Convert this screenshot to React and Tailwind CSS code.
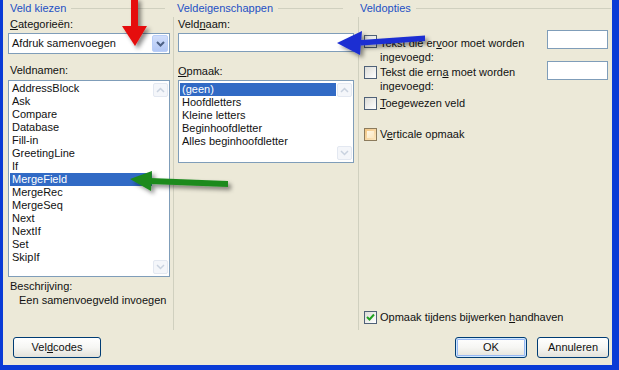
import React from "react";

const Chevron = ({ up, color = "#4D6185", w = 2 }) => (
  <svg width="9" height="6" viewBox="0 0 9 6">
    <path d={up ? "M1 5 L4.5 1.5 L8 5" : "M1 1 L4.5 4.5 L8 1"} fill="none" stroke={color} strokeWidth={w} />
  </svg>
);

const ScrollBtn = ({ up }) => (
  <div className="w-[15px] h-[14px] rounded-[2px] border border-[#E3E8F1] bg-[#F4F6FA] flex items-center justify-center">
    <Chevron up={up} color="#C9D2DF" w={1.5} />
  </div>
);

const ListBox = ({ items, selected, h, topPad = "pt-[1px]" }) => (
  <div className={`border border-[#7F9DB9] bg-white flex ${h}`}>
    <div className={`flex-1 flex flex-col ${topPad} pl-[1px]`}>
      {items.map((it) => (
        <div
          key={it}
          className={`h-[13px] leading-[13px] pl-[2px] ${it === selected ? "bg-[#316AC5] text-white" : "text-[#111]"}`}
        >
          {it}
        </div>
      ))}
    </div>
    <div className="w-[17px] flex flex-col justify-between items-center py-[2px] pr-[1px]">
      <ScrollBtn up />
      <ScrollBtn />
    </div>
  </div>
);

const Check = ({ checked, hover }) => (
  <div
    className={`w-[13px] h-[13px] shrink-0 border flex items-center justify-center ${
      hover
        ? "border-[#8C7B5C] bg-gradient-to-br from-[#F2C583] to-[#FCE8C2]"
        : "border-[#4F6178] bg-gradient-to-br from-[#DCDCD7] to-white"
    }`}
  >
    {hover && <div className="w-[7px] h-[7px] bg-gradient-to-br from-[#FFF7E6] to-[#FBE6BE]" />}
    {checked && (
      <svg width="9" height="9" viewBox="0 0 9 9">
        <path d="M1 4 L3.5 6.5 L8 1.5" fill="none" stroke="#21A121" strokeWidth="2" />
      </svg>
    )}
  </div>
);

const Header = ({ children, mr }) => (
  <div className={`h-[17px] flex items-center ${mr}`}>
    <span className="text-[#1E50C4] leading-[13px]">{children}</span>
    <div className="flex-1 h-px bg-[#D0D0BF] ml-[5px]" />
  </div>
);

const Button = ({ children, focus, w }) => (
  <div
    className={`${w} h-[21px] rounded-[3px] border border-[#003C74] bg-gradient-to-b from-white via-[#F6F6F3] to-[#E3E2DA] flex items-center justify-center ${
      focus ? "shadow-[inset_0_0_0_1px_#CEE7FF,inset_0_0_0_2px_#98B8F3]" : ""
    }`}
  >
    <span className="leading-[13px]">{children}</span>
  </div>
);

export default function App() {
  const fields = [
    "AddressBlock",
    "Ask",
    "Compare",
    "Database",
    "Fill-in",
    "GreetingLine",
    "If",
    "MergeField",
    "MergeRec",
    "MergeSeq",
    "Next",
    "NextIf",
    "Set",
    "SkipIf",
  ];
  const formats = ["(geen)", "Hoofdletters", "Kleine letters", "Beginhoofdletter", "Alles beginhoofdletter"];

  return (
    <div className="w-[619px] h-[370px] bg-[#0A3BD6] relative overflow-hidden font-['Liberation_Sans',sans-serif] text-[11px] text-[#111]">
      <div className="ml-[3px] mr-[7px] h-[365px] bg-[#ECE9D8] flex flex-col">
        <div className="h-[330px] flex">
          {/* Left column */}
          <div className="w-[170px] flex flex-col pl-[5px] pr-[3px]">
            <div className="pl-[2px]">
              <Header mr="mr-[5px]">Veld kiezen</Header>
            </div>
            <div className="pl-[2px] mt-[1px] h-[13px] leading-[13px]">
              <u>C</u>ategorieën:
            </div>
            <div className="mt-[2px] h-[21px] border border-[#7F9DB9] bg-white flex items-center pl-[3px] pr-[1px]">
              <span className="flex-1 leading-[13px]">Afdruk samenvoegen</span>
              <div className="w-[16px] h-[17px] rounded-[2px] border border-[#B9CEF7] bg-gradient-to-b from-[#D1DEFB] to-[#B3C8F5] flex items-center justify-center">
                <Chevron />
              </div>
            </div>
            <div className="pl-[2px] mt-[10px] h-[13px] leading-[13px]">Veldnamen:</div>
            <div className="mt-[3px]">
              <ListBox items={fields} selected="MergeField" h="h-[197px]" topPad="pt-[1px]" />
            </div>
            <div className="pl-[2px] mt-[3px] h-[13px] leading-[13px]">Beschrijving:</div>
            <div className="pl-[11px] mt-[1px] h-[13px] leading-[13px]">Een samenvoegveld invoegen</div>
          </div>

          {/* Middle column */}
          <div className="w-[185px] flex flex-col">
            <div className="pl-[4px]">
              <Header mr="mr-[15px]">Veldeigenschappen</Header>
            </div>
            <div className="flex-1 border-l border-[#D0D0BF] pl-[4px] pr-[4px] flex flex-col">
              <div className="mt-[1px] h-[13px] leading-[13px]">
                Veld<u>n</u>aam:
              </div>
              <div className="mt-[2px] h-[19px] border border-[#7F9DB9] bg-white" />
              <div className="mt-[13px] h-[13px] leading-[13px]">
                <u>O</u>pmaak:
              </div>
              <div className="mt-[2px]">
                <ListBox items={formats} selected="(geen)" h="h-[83px]" topPad="pt-[2px]" />
              </div>
            </div>
          </div>

          {/* Right column */}
          <div className="flex-1 flex flex-col">
            <div className="pl-[2px]">
              <Header mr="mr-[1px]">Veldopties</Header>
            </div>
            <div className="flex-1 border-l border-[#D0D0BF] pl-[5px] flex flex-col">
              <div className="flex">
                <div className="flex-1 flex flex-col">
                  <div className="mt-[18px] flex gap-[3px]">
                    <Check />
                    <div className="mt-[1px] leading-[14px]">
                      Tekst die er<u>v</u>oor moet worden
                      <br />
                      ingevoegd:
                    </div>
                  </div>
                  <div className="mt-[1px] flex gap-[3px]">
                    <div className="mt-[1px]">
                      <Check />
                    </div>
                    <div className="leading-[14px]">
                      Tekst die ern<u>a</u> moet worden
                      <br />
                      ingevoegd:
                    </div>
                  </div>
                  <div className="mt-[4px] flex gap-[3px] items-center">
                    <Check />
                    <div className="leading-[13px]">
                      <u>T</u>oegewezen veld
                    </div>
                  </div>
                  <div className="mt-[18px] flex gap-[3px] items-center">
                    <Check hover />
                    <div className="leading-[13px]">
                      V<u>e</u>rticale opmaak
                    </div>
                  </div>
                </div>
                <div className="w-[61px] mr-[4px] flex flex-col">
                  <div className="mt-[13px] h-[19px] border border-[#7F9DB9] bg-white" />
                  <div className="mt-[12px] h-[19px] border border-[#7F9DB9] bg-white" />
                </div>
              </div>
              <div className="mt-auto mb-[6px] flex gap-[3px] items-center">
                <Check checked />
                <div className="leading-[13px]">
                  Opmaak tijdens bijwerken <u>h</u>andhaven
                </div>
              </div>
            </div>
          </div>
        </div>

        {/* Buttons */}
        <div className="mt-[7px] flex items-center pl-[10px] pr-[3px]">
          <Button w="w-[88px]">
            Vel<u>d</u>codes
          </Button>
          <div className="flex-1" />
          <Button w="w-[72px]" focus>
            OK
          </Button>
          <div className="w-[10px]" />
          <Button w="w-[72px]">Annuleren</Button>
        </div>
      </div>

      {/* Annotation arrows */}
      <svg className="absolute inset-0 pointer-events-none" width="619" height="370" viewBox="0 0 619 370">
        <defs>
          <filter id="sh" x="-50%" y="-50%" width="200%" height="200%">
            <feDropShadow dx="3" dy="3" stdDeviation="2" floodColor="#000" floodOpacity="0.45" />
          </filter>
        </defs>
        <g filter="url(#sh)">
          <polygon points="131,-2 138,-2 138,26 147,26 135,46 122,26 131,26" fill="#E5100E" />
          <polygon points="425,35.5 425,41 361,45.5 361,40" fill="#1B2ED2" />
          <polygon points="337,43 362,31 360,55" fill="#1B2ED2" />
          <polygon points="228,181 228,187 150,184 150,178" fill="#1C8A1E" />
          <polygon points="130,179 152,171 151,191" fill="#1C8A1E" />
        </g>
      </svg>
    </div>
  );
}
